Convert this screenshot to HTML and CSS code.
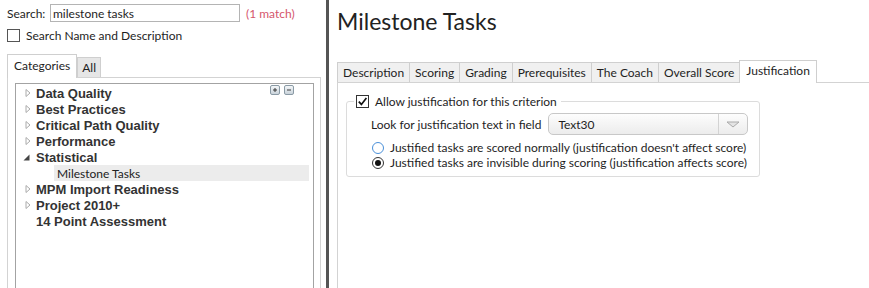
FILE: index.html
```html
<!DOCTYPE html>
<html lang="en">
<head>
    <meta charset="UTF-8">
    <title>Milestone Tasks</title>
    <link rel="stylesheet" href="styles.css">
</head>
<body>
    <div class="app">
        <aside class="sidebar">
            <div class="search-row">
                <span class="search-label">Search:</span>
                <input class="search-input" type="text" value="milestone tasks">
                <span class="match">(1 match)</span>
            </div>
            <label class="check-row">
                <span class="checkbox"></span>
                Search Name and Description
            </label>
            <div class="side-tabs">
                <div class="side-tab active">Categories</div>
                <div class="side-tab">All</div>
            </div>
            <div class="side-panel">
                <div class="tree">
                    <div class="tree-tools">
                        <span class="tool-btn">
                            <svg width="10" height="10" viewBox="0 0 10 10"><path d="M2.5 5h5M5 2.5v5" stroke="#333" stroke-width="1.2"/></svg>
                        </span>
                        <span class="tool-btn">
                            <svg width="10" height="10" viewBox="0 0 10 10"><path d="M2.5 5h5" stroke="#333" stroke-width="1.2"/></svg>
                        </span>
                    </div>
                    <div class="tree-row"><span class="twisty"><svg width="6" height="8" viewBox="0 0 6 8"><path d="M1 0.5v7l4-3.5z" fill="none" stroke="#aaa"/></svg></span>Data Quality</div>
                    <div class="tree-row"><span class="twisty"><svg width="6" height="8" viewBox="0 0 6 8"><path d="M1 0.5v7l4-3.5z" fill="none" stroke="#aaa"/></svg></span>Best Practices</div>
                    <div class="tree-row"><span class="twisty"><svg width="6" height="8" viewBox="0 0 6 8"><path d="M1 0.5v7l4-3.5z" fill="none" stroke="#aaa"/></svg></span>Critical Path Quality</div>
                    <div class="tree-row"><span class="twisty"><svg width="6" height="8" viewBox="0 0 6 8"><path d="M1 0.5v7l4-3.5z" fill="none" stroke="#aaa"/></svg></span>Performance</div>
                    <div class="tree-row"><span class="twisty open"><svg width="7" height="7" viewBox="0 0 7 7"><path d="M6.5 0.5v6h-6z" fill="#444"/></svg></span>Statistical</div>
                    <div class="tree-row child">Milestone Tasks</div>
                    <div class="tree-row"><span class="twisty"><svg width="6" height="8" viewBox="0 0 6 8"><path d="M1 0.5v7l4-3.5z" fill="none" stroke="#aaa"/></svg></span>MPM Import Readiness</div>
                    <div class="tree-row"><span class="twisty"><svg width="6" height="8" viewBox="0 0 6 8"><path d="M1 0.5v7l4-3.5z" fill="none" stroke="#aaa"/></svg></span>Project 2010+</div>
                    <div class="tree-row"><span class="twisty"></span>14 Point Assessment</div>
                </div>
            </div>
        </aside>
        <div class="divider"></div>
        <main class="detail">
            <h1>Milestone Tasks</h1>
            <div class="tabs">
                <div class="tab">Description</div>
                <div class="tab">Scoring</div>
                <div class="tab">Grading</div>
                <div class="tab">Prerequisites</div>
                <div class="tab">The Coach</div>
                <div class="tab">Overall Score</div>
                <div class="tab active">Justification</div>
            </div>
            <div class="tab-body">
                <fieldset class="group">
                    <legend>
                        <span class="checkbox checked">
                            <svg width="11" height="11" viewBox="0 0 11 11"><path d="M1.8 5.6l2.6 2.8 5-6.4" fill="none" stroke="#111" stroke-width="1.7"/></svg>
                        </span>
                        Allow justification for this criterion
                    </legend>
                    <div class="field-row">
                        <span>Look for justification text in field</span>
                        <div class="combo">
                            <span class="combo-text">Text30</span>
                            <span class="combo-btn">
                                <svg width="14" height="7" viewBox="0 0 14 7"><path d="M1 1h12l-6 5z" fill="#e4e4e4" stroke="#aaa"/></svg>
                            </span>
                        </div>
                    </div>
                    <label class="radio-row"><span class="radio"></span>Justified tasks are scored normally (justification doesn't affect score)</label>
                    <label class="radio-row"><span class="radio selected"></span>Justified tasks are invisible during scoring (justification affects score)</label>
                </fieldset>
            </div>
        </main>
    </div>
</body>
</html>
```

FILE: styles.css
```css
body {
    margin: 0;
    font-family: Lato, "Open Sans", sans-serif;
    font-size: 12px;
    color: #1e1e1e;
    background: #fff;
}

.app {
    display: flex;
    height: 288px;
    overflow: hidden;
}

/* left side: search + category tree */
.sidebar {
    width: 326px;
    flex: none;
    box-sizing: border-box;
    padding: 4px 0 0 7px;
}

.search-row {
    display: flex;
    align-items: center;
    height: 18px;
    white-space: nowrap;
}

.search-label {
    width: 43px;
}

.search-input {
    width: 190px;
    height: 18px;
    box-sizing: border-box;
    border: 1px solid #b4b4b4;
    padding: 0 2px;
    font: inherit;
    color: #1e1e1e;
    outline: none;
}

.match {
    margin-left: 6px;
    color: #d5566c;
}

.check-row {
    display: flex;
    align-items: center;
    gap: 6px;
    margin-top: 6px;
    height: 14px;
}

.checkbox {
    width: 11px;
    height: 11px;
    border: 1px solid #555;
    background: #fff;
    display: inline-flex;
    align-items: center;
    justify-content: center;
    flex: none;
}

.side-tabs {
    display: flex;
    align-items: flex-end;
    margin-top: 12px;
    height: 23px;
    position: relative;
    z-index: 1;
}

.side-tab {
    height: 19px;
    line-height: 19px;
    padding: 0 4px;
    border: 1px solid #cfcfcf;
    border-bottom: none;
    background: #e6e6e6;
}

.side-tab.active {
    height: 23px;
    line-height: 22px;
    padding: 0 6px;
    background: #fff;
    margin-bottom: -1px;
}

.side-panel {
    width: 314px;
    box-sizing: border-box;
    border: 1px solid #d3d3d3;
    padding: 5px 6px 0 7px;
    height: 230px;
}

.tree {
    position: relative;
    height: 230px;
    border: 1px solid #a3a3a3;
    padding-top: 1px;
}

.tree-tools {
    position: absolute;
    top: 1px;
    right: 19px;
    display: flex;
    gap: 4px;
}

.tool-btn {
    width: 8px;
    height: 8px;
    border: 1px solid #8a9aa5;
    border-radius: 2px;
    background: linear-gradient(#f4f7f9, #c9d3da);
    display: flex;
    align-items: center;
    justify-content: center;
    overflow: hidden;
}

.tree-row {
    height: 16px;
    display: flex;
    align-items: center;
    padding-left: 9px;
    font-family: "Liberation Sans", Arial, sans-serif;
    font-weight: bold;
    font-size: 13px;
    color: #333;
}

.twisty {
    width: 11px;
    flex: none;
    display: flex;
    align-items: center;
}

.twisty.open {
    margin-left: -2px;
    width: 13px;
}

.tree-row.child {
    margin: 0 4px 0 38px;
    padding-left: 3px;
    font-family: Lato, "Open Sans", sans-serif;
    font-weight: normal;
    font-size: 12px;
    color: #222;
    background: #ececec;
}

.divider {
    width: 3px;
    flex: none;
    background: #555;
}

/* right side: criterion details */
.detail {
    flex: 1;
    padding-left: 8px;
}

h1 {
    margin: 8px 0 0 0;
    font-size: 23px;
    line-height: 26px;
    font-weight: 400;
    color: #222;
}

.tabs {
    display: flex;
    align-items: flex-end;
    margin-top: 27px;
    height: 21px;
    position: relative;
    z-index: 1;
}

.tab {
    height: 19px;
    line-height: 19px;
    padding: 0 5px;
    border: 1px solid #cfcfcf;
    border-bottom: none;
    border-right: none;
    background: #f0f0f0;
    white-space: nowrap;
}

.tab.active {
    height: 22px;
    line-height: 20px;
    padding: 0 6px;
    background: #fff;
    border-right: 1px solid #cfcfcf;
    margin-bottom: -1px;
}

.tab-body {
    border-top: 1px solid #d3d3d3;
    border-left: 1px solid #d3d3d3;
    height: 220px;
    padding: 11px 0 0 8px;
}

.group {
    width: 414px;
    box-sizing: border-box;
    margin: 0;
    border: 1px solid #dcdcdc;
    border-radius: 3px;
    padding: 0 2px 6px 24px;
    white-space: nowrap;
}

.group legend {
    margin-left: -17px;
    padding: 0 4px 0 2px;
    display: flex;
    align-items: center;
    gap: 6px;
    height: 14px;
}

.checkbox.checked {
    border-color: #333;
}

.field-row {
    display: flex;
    align-items: center;
    margin-top: 5px;
    height: 22px;
}

.combo {
    margin-left: 7px;
    width: 200px;
    height: 22px;
    flex: none;
    box-sizing: border-box;
    border: 1px solid #c8c8c8;
    border-radius: 5px;
    background: linear-gradient(#fdfdfd, #ececec);
    display: flex;
    align-items: center;
}

.combo-text {
    flex: 1;
    padding-left: 9px;
}

.combo-btn {
    width: 28px;
    height: 100%;
    border-left: 1px solid #d3d3d3;
    display: flex;
    align-items: center;
    justify-content: center;
}

.radio-row {
    display: flex;
    align-items: center;
    gap: 6px;
    height: 15px;
    margin-left: 1px;
}

.field-row + .radio-row {
    margin-top: 5px;
}

.radio {
    width: 10px;
    height: 10px;
    border: 1px solid #4a90d9;
    border-radius: 50%;
    background: #fff;
    flex: none;
    display: flex;
    align-items: center;
    justify-content: center;
}

.radio.selected {
    border-color: #333;
}

.radio.selected::after {
    content: "";
    width: 6px;
    height: 6px;
    border-radius: 50%;
    background: #111;
}
```
